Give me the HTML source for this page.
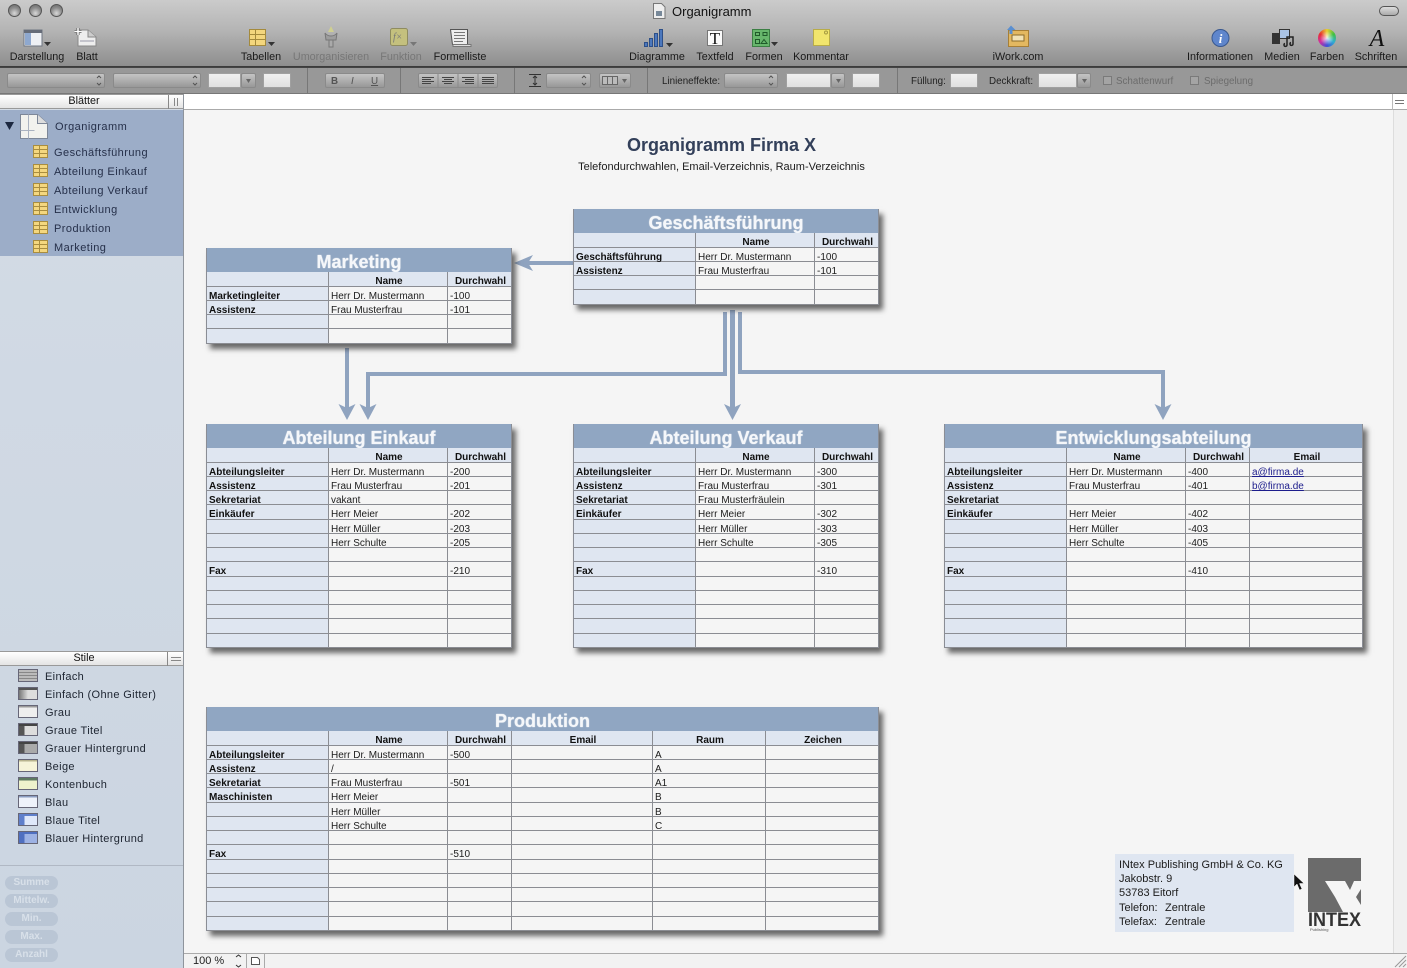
<!DOCTYPE html>
<html lang="de"><head><meta charset="utf-8"><title>Organigramm</title>
<style>
*{box-sizing:border-box}
html,body{margin:0;padding:0}
body{width:1407px;height:968px;position:relative;overflow:hidden;background:#f5f5f5;font-family:"Liberation Sans",sans-serif;color:#111}
.a{position:absolute}
.top{left:0;top:0;width:1407px;height:67px;background:linear-gradient(#cbcbcb,#b5b5b5 45%,#8e8e8e);border-bottom:1px solid #3c3c3c}
.fmt{left:0;top:67px;width:1407px;height:27px;background:#989898;border-top:1px solid #444;border-bottom:1px solid #777}
.tl{position:absolute;top:51px;font-size:10.8px;line-height:12px;transform:translateX(-50%);white-space:nowrap;color:#1a1a1a}
.tl.d{color:#777}
.lt{position:absolute;width:13px;height:13px;top:4px;border-radius:50%;background:radial-gradient(circle at 50% 75%,#d8d8d8,#8c8c8c 55%,#666);border:1px solid #555}
.s{position:absolute;top:73px;height:15px;background:linear-gradient(#c4c4c4,#989898);border:1px solid #8a8a8a;border-radius:2px}
.w{background:linear-gradient(#f0f0f0,#e0e0e0);border:1px solid #a0a0a0;border-radius:1px}
.sep{position:absolute;top:68px;height:25px;width:1px;background:#777}
.f{position:absolute;top:75.500px;font-size:9.8px;line-height:11px;color:#222;white-space:nowrap}
.f.d{color:#6c6c6c}
.cb{position:absolute;top:76px;width:9px;height:9px;border:1px solid #7a7a7a;background:#a4a4a4}
.side{left:0;top:94px;width:184px;height:874px;background:linear-gradient(#d3dbe5,#cbd5e1);border-right:1px solid #8e949c}
.hd{left:0;width:184px;height:15px;background:linear-gradient(#fff,#e4e4e4);border-top:1px solid #999;border-bottom:1px solid #999;font-size:10.8px;line-height:13px;text-align:center;padding-right:15px;border-right:1px solid #8e949c}
.sel{left:0;top:110px;width:183px;height:146px;background:#9cadc8}
.it{position:absolute;left:54px;font-size:11px;line-height:13px;color:#26304a;letter-spacing:.45px;white-space:nowrap}
.gi{position:absolute;left:33px;width:15px;height:13px;border:1px solid #a98d3f;background:
linear-gradient(#a98d3f,#a98d3f) 0 3px/100% 1px no-repeat,linear-gradient(#a98d3f,#a98d3f) 0 7px/100% 1px no-repeat,linear-gradient(#a98d3f,#a98d3f) 5px 0/1px 100% no-repeat,#f4d77f}
.st{position:absolute;left:45px;font-size:11px;line-height:13px;color:#1d2430;letter-spacing:.35px;white-space:nowrap}
.si{position:absolute;left:18px;width:20px;height:13px;border:1px solid #667}
.pb{position:absolute;left:5px;width:53px;height:14px;border-radius:7px;background:#bac6d5;color:#d8e0e9;font-size:10px;font-weight:bold;line-height:14px;text-align:center}
.t{position:absolute;box-shadow:4px 5px 5px rgba(30,30,30,.65);background:#f5f5f5;border-left:1px solid #8a8d95;border-right:1px solid #8a8d95}
.t h2{margin:0;height:24px;background:#90a6c2;color:#f5f7fa;font-size:18px;line-height:28px;text-align:center;font-weight:bold;overflow:hidden;text-shadow:0 0 1px #fff}
.t table{border-spacing:0;table-layout:fixed;width:100%;font-size:10px;line-height:7px}
.t td{height:14px;padding:6px 0 0 2px;border-bottom:1px solid #8b8d93;border-left:1px solid #8b8d93;white-space:nowrap;overflow:visible;color:#1c1c1c}
.t td:first-child{background:#dfe6f1;font-weight:bold;border-left:0;color:#111}
.t tr:nth-child(4n+1) td{height:15px;padding-top:4px;line-height:9px}
.t tr:first-child td{background:#dfe6f1;font-weight:bold;text-align:center;color:#111}
.t a{color:#1c1c8c;text-decoration:underline}
.lbl{position:absolute;font-size:11px;line-height:14px;white-space:nowrap;color:#1c1c1c}
</style></head><body>

<div class="a top"></div>
<div class="lt" style="left:8px"></div><div class="lt" style="left:29px"></div><div class="lt" style="left:50px"></div>
<svg class="a" style="left:652px;top:3px" width="14" height="16" viewBox="0 0 14 16"><path d="M1.500 .5h8l3.500 3.500v11.500h-11.500z" fill="#eee" stroke="#777"/><path d="M4 8h6v5h-6z" fill="#789"/></svg>
<div class="a" style="left:672px;top:4px;font-size:13px;line-height:15px;color:#111">Organigramm</div>
<div class="a" style="left:1379px;top:6px;width:20px;height:10px;border:1px solid #555;border-radius:5px;background:linear-gradient(#ddd,#aaa)"></div>

<div class="a" style="left:1318px;top:29px;width:18px;height:18px;border-radius:50%;background:radial-gradient(circle,rgba(255,255,255,.85),rgba(255,255,255,0) 55%),conic-gradient(#e8d030,#40c040,#30b0d0,#4050d8,#d030a0,#e83030,#e8d030)"></div>

<svg class="a" style="left:0;top:20px" width="1407" height="32" viewBox="0 0 1407 32">
<!-- Darstellung -->
<rect x="24" y="10" width="18" height="16" fill="#eef0f4" stroke="#6f7682"/><rect x="24" y="10" width="18" height="3" fill="#666c78"/><rect x="25" y="13" width="6" height="12" fill="#8ea8cf"/>
<path d="M44 22h7l-3.500 4z" fill="#333"/>
<!-- Blatt -->
<path d="M78 10h10l8 7v9h-18z" fill="#eee" stroke="#888"/><path d="M88 10v7h8" fill="#ccc" stroke="#888"/><path d="M78 8v7M74.500 11.500h7" stroke="#555" stroke-width="3"/><path d="M78 8v7M74.500 11.500h7" stroke="#fff" stroke-width="1.500"/><path d="M80 21h14" stroke="#99a"/>
<!-- Tabellen -->
<rect x="249.500" y="9.500" width="16" height="16" fill="#f3d67d" stroke="#a48a3c"/><path d="M249.500 14.500h16M249.500 19.500h16M255.500 9.500v16" stroke="#a48a3c"/>
<path d="M268 22h7l-3.500 4z" fill="#333"/>
<!-- Umorganisieren -->
<path d="M331 6l3 6h-6z" fill="#cfcf90"/><path d="M325 13c3 4 9 4 12 0l-1 7h-10z" fill="#9d9d9d" stroke="#777"/><path d="M329 20h4v7h-4z" fill="#aaa" stroke="#777"/>
<!-- Funktion -->
<rect x="390.500" y="8.500" width="17" height="17" rx="2" fill="#c4c07e" stroke="#8f8c60"/><text x="393" y="20" font-family="Liberation Serif" font-style="italic" font-size="10" fill="#777">f×</text>
<path d="M410 22h7l-3.500 4z" fill="#777"/>
<!-- Formelliste -->
<path d="M450.500 9.500h17v15h-15z" fill="#eee" stroke="#555"/><path d="M454 12.500h11M454 15.500h11M454 18.500h11M454 21.500h9" stroke="#777"/><path d="M453 24.500h18v2h-18z" fill="#ddd" stroke="#777"/>
<!-- Diagramme -->
<path d="M644.500 22.500h3v4h-3zM649.500 18.500h3v8h-3zM654.500 13.500h3v13h-3zM659.500 9.500h3v17h-3z" fill="#4c78bd" stroke="#2d4f88"/>
<path d="M666 23h7l-3.500 4z" fill="#333"/>
<!-- Textfeld -->
<rect x="707.500" y="10.500" width="15" height="15" fill="#fafafa" stroke="#777"/><text x="715" y="24" text-anchor="middle" font-family="Liberation Serif" font-size="17" fill="#111">T</text>
<!-- Formen -->
<rect x="752.500" y="9.500" width="17" height="17" fill="#67b66c" stroke="#3c7f44"/><path d="M755.500 12.500h4v3h-4zM763 12.500h4v3h-4zM755.500 19.500h4v4h-4zM761 23.500l3-4 3 4z" fill="none" stroke="#1f5a2a"/>
<path d="M771 22h7l-3.500 4z" fill="#333"/>
<!-- Kommentar -->
<rect x="813.500" y="9.500" width="16" height="16" fill="#f1e56d" stroke="#b8ac48"/><circle cx="826" cy="12.500" r="1.500" fill="none" stroke="#a59a40"/>
<!-- iWork -->
<rect x="1008.500" y="10.500" width="20" height="16" fill="#e3b860" stroke="#a77f36"/><rect x="1012" y="15" width="12" height="6" fill="#f1e2b4" stroke="#8a6b2d"/><path d="M1007 10l4-4.500 4.500 4.500h-3v4h-3v-4z" fill="#5a8fd0"/>
<!-- Informationen -->
<circle cx="1220.500" cy="18" r="8.500" fill="#5f86cc" stroke="#39588f"/><text x="1220.500" y="23" text-anchor="middle" font-family="Liberation Serif" font-style="italic" font-weight="bold" font-size="13" fill="#fff">i</text>
<!-- Medien -->
<rect x="1272" y="13" width="8" height="11" fill="#333"/><rect x="1279.500" y="9.500" width="10" height="9" fill="#a9c3e5" stroke="#333"/><path d="M1287 25v-8h6v7M1287 25a1.500 1.500 0 1 1-2-1.500M1293 24a1.500 1.500 0 1 1-2-1.500" fill="none" stroke="#222" stroke-width="1.500"/>
<text x="1377" y="26" text-anchor="middle" font-family="Liberation Serif" font-style="italic" font-size="24" fill="#111">A</text>
</svg>

<span class="tl" style="left:37px">Darstellung</span><span class="tl" style="left:87px">Blatt</span><span class="tl" style="left:261px">Tabellen</span><span class="tl d" style="left:331px">Umorganisieren</span><span class="tl d" style="left:401px">Funktion</span><span class="tl" style="left:460px">Formelliste</span><span class="tl" style="left:657px">Diagramme</span><span class="tl" style="left:715px">Textfeld</span><span class="tl" style="left:764px">Formen</span><span class="tl" style="left:821px">Kommentar</span><span class="tl" style="left:1018px">iWork.com</span><span class="tl" style="left:1220px">Informationen</span><span class="tl" style="left:1282px">Medien</span><span class="tl" style="left:1327px">Farben</span><span class="tl" style="left:1376px">Schriften</span>

<div class="a fmt"></div>
<div class="s" style="left:7px;width:98px"></div><div class="s" style="left:113px;width:88px"></div>
<div class="s w" style="left:208px;width:33px"></div><div class="s" style="left:241px;width:15px"></div>
<div class="s w" style="left:263px;width:28px"></div>
<div class="sep" style="left:307px"></div>
<div class="s" style="left:325px;width:60px"></div>
<span class="f" style="left:331px;font-weight:bold;color:#555">B</span><span class="f" style="left:351px;font-style:italic;color:#555">I</span><span class="f" style="left:371px;text-decoration:underline;color:#555">U</span>
<div class="sep" style="left:400px"></div>
<div class="s" style="left:418px;width:80px"></div>
<svg class="a" style="left:418px;top:73px" width="80" height="15" viewBox="0 0 80 15"><path d="M20 0v15M40 0v15M60 0v15" stroke="#8a8a8a"/><path d="M4 4.500h12M4 6.500h9M4 8.500h12M4 10.500h9M24 4.500h12M26 6.500h8M24 8.500h12M26 10.500h8M44 4.500h12M47 6.500h9M44 8.500h12M47 10.500h9M64 4.500h12M64 6.500h12M64 8.500h12M64 10.500h12" stroke="#444"/></svg>
<div class="sep" style="left:514px"></div>
<svg class="a" style="left:528px;top:73px" width="14" height="15" viewBox="0 0 14 15"><path d="M1 1.500h12M1 13.500h12M7 3v9M5 5l2-2 2 2M5 10l2 2 2-2" fill="none" stroke="#333"/></svg>
<div class="s" style="left:546px;width:45px"></div>
<div class="s" style="left:599px;width:32px"></div>
<svg class="a" style="left:602px;top:76px" width="16" height="9" viewBox="0 0 16 9"><path d="M.5 .5h15v8h-15zM5.500 .5v8M10.500 .5v8" fill="#bbb" stroke="#666"/></svg>
<div class="sep" style="left:647px"></div>
<span class="f" style="left:662px">Linieneffekte:</span>
<div class="s" style="left:724px;width:54px"></div>
<div class="s w" style="left:786px;width:45px"></div><div class="s" style="left:831px;width:14px"></div>
<div class="s w" style="left:852px;width:28px"></div>
<div class="sep" style="left:897px"></div>
<span class="f" style="left:911px">Füllung:</span>
<div class="s w" style="left:950px;width:28px"></div>
<span class="f" style="left:989px">Deckkraft:</span>
<div class="s w" style="left:1038px;width:39px"></div><div class="s" style="left:1077px;width:14px"></div>
<div class="cb" style="left:1103px"></div><span class="f d" style="left:1116px">Schattenwurf</span>
<div class="cb" style="left:1190px"></div><span class="f d" style="left:1204px">Spiegelung</span>
<svg class="a" style="left:0;top:73px" width="1100" height="15" viewBox="0 0 1100 15"><path d="M97 5l2-2 2 2M97 10l2 2 2-2M193 5l2-2 2 2M193 10l2 2 2-2M582 5l2-2 2 2M582 10l2 2 2-2M769 5l2-2 2 2M769 10l2 2 2-2" fill="none" stroke="#555"/><path d="M246 6h5l-2.500 4zM622 6h5l-2.500 4zM836 6h5l-2.500 4zM1082 6h5l-2.500 4z" fill="#666"/></svg>

<!-- ruler strip -->
<div class="a" style="left:184px;top:94px;width:1223px;height:16px;background:#fff;border-bottom:1px solid #aaa"></div>
<div class="a" style="left:1392px;top:94px;width:15px;height:16px;background:#fff;border-left:1px solid #bbb;border-bottom:1px solid #aaa"></div>
<svg class="a" style="left:1394px;top:98px" width="11" height="8"><path d="M1 2.500h9M1 5.500h9" stroke="#777"/></svg>
<div class="a" style="left:1393px;top:110px;width:14px;height:843px;background:#f0f0f0;border-left:1px solid #ddd"></div>
<div class="a" style="left:184px;top:953px;width:1223px;height:15px;background:#f2f2f2;border-top:1px solid #aaa"></div>
<div class="a" style="left:193px;top:955px;font-size:11px;line-height:13px;color:#222">100 %</div>
<svg class="a" style="left:184px;top:954px" width="90" height="14"><path d="M52 2l2.500-2 2.500 2M52 10l2.500 2 2.500-2" fill="none" stroke="#333" transform="translate(0 1)"/><path d="M62.500 0v14M80.500 0v14" stroke="#aaa"/><path d="M67.500 3.500h6l2 2v5h-8z" fill="#fff" stroke="#555"/></svg>

<!-- sidebar -->
<div class="a side"></div>
<div class="a hd" style="top:94px">Blätter</div>
<svg class="a" style="left:168px;top:95px" width="16" height="14"><path d="M.5 0v14M6.500 3v8M9.500 3v8" stroke="#888"/></svg>
<div class="a sel"></div>
<svg class="a" style="left:4px;top:113px" width="46" height="27" viewBox="0 0 46 27"><path d="M1 9h9l-4.500 8z" fill="#1c2840"/><path d="M16.500 1.500h17l10 9v15h-27z" fill="#f2f2ee" stroke="#7d8798"/><path d="M33.500 1.500v9h10" fill="#ddd" stroke="#7d8798"/><path d="M16.500 17.500h14M24.500 1.500v24" stroke="#aab2c0"/></svg>
<span class="it" style="top:121px;left:55px">Organigramm</span>
<i class="gi" style="top:145px"></i><span class="it" style="top:147px">Geschäftsführung</span>
<i class="gi" style="top:164px"></i><span class="it" style="top:166px">Abteilung Einkauf</span>
<i class="gi" style="top:183px"></i><span class="it" style="top:185px">Abteilung Verkauf</span>
<i class="gi" style="top:202px"></i><span class="it" style="top:204px">Entwicklung</span>
<i class="gi" style="top:221px"></i><span class="it" style="top:223px">Produktion</span>
<i class="gi" style="top:240px"></i><span class="it" style="top:242px">Marketing</span>

<div class="a hd" style="top:651px">Stile</div>
<svg class="a" style="left:167px;top:652px" width="17" height="14"><path d="M.5 0v14M4 5.500h10M4 8.500h10" stroke="#888"/></svg>
<i class="si" style="top:669px;background:repeating-linear-gradient(#bbb 0 2px,#888 2px 3px)"></i><span class="st" style="top:671px">Einfach</span>
<i class="si" style="top:687px;background:linear-gradient(#555 20%,transparent 20%),linear-gradient(90deg,#777,#ddd 50%)"></i><span class="st" style="top:689px">Einfach (Ohne Gitter)</span>
<i class="si" style="top:705px;background:linear-gradient(#999 15%,#eee 15%)"></i><span class="st" style="top:707px">Grau</span>
<i class="si" style="top:723px;background:linear-gradient(#444 20%,transparent 20%),linear-gradient(90deg,#555 30%,#ddd 30%)"></i><span class="st" style="top:725px">Graue Titel</span>
<i class="si" style="top:741px;background:linear-gradient(#444 20%,transparent 20%),linear-gradient(90deg,#555 30%,#aaa 30%)"></i><span class="st" style="top:743px">Grauer Hintergrund</span>
<i class="si" style="top:759px;background:linear-gradient(#b8b48e 15%,#f6f4d8 15%)"></i><span class="st" style="top:761px">Beige</span>
<i class="si" style="top:777px;background:linear-gradient(#5d7a60 25%,#eef2cc 25%)"></i><span class="st" style="top:779px">Kontenbuch</span>
<i class="si" style="top:795px;background:linear-gradient(#8a9cc0 15%,#eef2fa 15%)"></i><span class="st" style="top:797px">Blau</span>
<i class="si" style="top:813px;background:linear-gradient(#5f7fcb 20%,transparent 20%),linear-gradient(90deg,#5f7fcb 30%,#dfe8fa 30%)"></i><span class="st" style="top:815px">Blaue Titel</span>
<i class="si" style="top:831px;background:linear-gradient(#4f6fc0 20%,transparent 20%),linear-gradient(90deg,#4f6fc0 30%,#9db2e4 30%)"></i><span class="st" style="top:833px">Blauer Hintergrund</span>
<div class="a" style="left:0;top:865px;width:183px;height:1px;background:#b0b8c4"></div>
<div class="pb" style="top:876px">Summe</div><div class="pb" style="top:894px">Mittelw.</div><div class="pb" style="top:912px">Min.</div><div class="pb" style="top:930px">Max.</div><div class="pb" style="top:948px">Anzahl</div>

<!-- canvas -->
<div class="a" style="left:184px;top:135px;width:1075px;text-align:center;font-size:18px;line-height:20px;font-weight:bold;color:#33405a">Organigramm Firma X</div>
<div class="a" style="left:184px;top:160px;width:1075px;text-align:center;font-size:11px;line-height:14px;color:#1c1c1c">Telefondurchwahlen, Email-Verzeichnis, Raum-Verzeichnis</div>

<svg class="a" style="left:184px;top:110px" width="1209" height="320" viewBox="184 110 1209 320">
<g fill="none" stroke="#8fa3bf" stroke-width="4">
<path d="M573 263h-50"/>
<path d="M347 348v60"/>
<path d="M368 408v-34h357v-62"/>
<path d="M732.500 310v98" stroke-width="5"/>
<path d="M740 312v60h423v36"/>
</g>
<g fill="#8fa3bf">
<path d="M514 263l19-8-5 8 5 8z"/>
<path d="M347 420l-8.500-16 8.500 4 8.500-4z"/>
<path d="M368 420l-8.500-16 8.500 4 8.500-4z"/>
<path d="M732.500 420l-8.500-16 8.500 4 8.500-4z"/>
<path d="M1163 420l-8.500-16 8.500 4 8.500-4z"/>
</g>
</svg>

<div class="t" style="left:573px;top:209px;width:306px"><h2>Geschäftsführung</h2><table><colgroup><col style="width:121px"><col style="width:119px"><col></colgroup>
<tr><td><td>Name<td>Durchwahl
<tr><td>Geschäftsführung<td>Herr Dr. Mustermann<td>-100
<tr><td>Assistenz<td>Frau Musterfrau<td>-101
<tr><td><td><td>
<tr><td><td><td>
</table></div>

<div class="t" style="left:206px;top:248px;width:306px"><h2>Marketing</h2><table><colgroup><col style="width:121px"><col style="width:119px"><col></colgroup>
<tr><td><td>Name<td>Durchwahl
<tr><td>Marketingleiter<td>Herr Dr. Mustermann<td>-100
<tr><td>Assistenz<td>Frau Musterfrau<td>-101
<tr><td><td><td>
<tr><td><td><td>
</table></div>

<div class="t" style="left:206px;top:424px;width:306px"><h2>Abteilung Einkauf</h2><table><colgroup><col style="width:121px"><col style="width:119px"><col></colgroup>
<tr><td><td>Name<td>Durchwahl
<tr><td>Abteilungsleiter<td>Herr Dr. Mustermann<td>-200
<tr><td>Assistenz<td>Frau Musterfrau<td>-201
<tr><td>Sekretariat<td>vakant<td>
<tr><td>Einkäufer<td>Herr Meier<td>-202
<tr><td><td>Herr Müller<td>-203
<tr><td><td>Herr Schulte<td>-205
<tr><td><td><td>
<tr><td>Fax<td><td>-210
<tr><td><td><td>
<tr><td><td><td>
<tr><td><td><td>
<tr><td><td><td>
<tr><td><td><td>
</table></div>

<div class="t" style="left:573px;top:424px;width:306px"><h2>Abteilung Verkauf</h2><table><colgroup><col style="width:121px"><col style="width:119px"><col></colgroup>
<tr><td><td>Name<td>Durchwahl
<tr><td>Abteilungsleiter<td>Herr Dr. Mustermann<td>-300
<tr><td>Assistenz<td>Frau Musterfrau<td>-301
<tr><td>Sekretariat<td>Frau Musterfräulein<td>
<tr><td>Einkäufer<td>Herr Meier<td>-302
<tr><td><td>Herr Müller<td>-303
<tr><td><td>Herr Schulte<td>-305
<tr><td><td><td>
<tr><td>Fax<td><td>-310
<tr><td><td><td>
<tr><td><td><td>
<tr><td><td><td>
<tr><td><td><td>
<tr><td><td><td>
</table></div>

<div class="t" style="left:944px;top:424px;width:419px"><h2>Entwicklungsabteilung</h2><table><colgroup><col style="width:121px"><col style="width:119px"><col style="width:64px"><col></colgroup>
<tr><td><td>Name<td>Durchwahl<td>Email
<tr><td>Abteilungsleiter<td>Herr Dr. Mustermann<td>-400<td><a>a@firma.de</a>
<tr><td>Assistenz<td>Frau Musterfrau<td>-401<td><a>b@firma.de</a>
<tr><td>Sekretariat<td><td><td>
<tr><td>Einkäufer<td>Herr Meier<td>-402<td>
<tr><td><td>Herr Müller<td>-403<td>
<tr><td><td>Herr Schulte<td>-405<td>
<tr><td><td><td><td>
<tr><td>Fax<td><td>-410<td>
<tr><td><td><td><td>
<tr><td><td><td><td>
<tr><td><td><td><td>
<tr><td><td><td><td>
<tr><td><td><td><td>
</table></div>

<div class="t" style="left:206px;top:707px;width:673px"><h2>Produktion</h2><table><colgroup><col style="width:121px"><col style="width:119px"><col style="width:64px"><col style="width:141px"><col style="width:113px"><col></colgroup>
<tr><td><td>Name<td>Durchwahl<td>Email<td>Raum<td>Zeichen
<tr><td>Abteilungsleiter<td>Herr Dr. Mustermann<td>-500<td><td>A<td>
<tr><td>Assistenz<td>/<td><td><td>A<td>
<tr><td>Sekretariat<td>Frau Musterfrau<td>-501<td><td>A1<td>
<tr><td>Maschinisten<td>Herr Meier<td><td><td>B<td>
<tr><td><td>Herr Müller<td><td><td>B<td>
<tr><td><td>Herr Schulte<td><td><td>C<td>
<tr><td><td><td><td><td><td>
<tr><td>Fax<td><td>-510<td><td><td>
<tr><td><td><td><td><td><td>
<tr><td><td><td><td><td><td>
<tr><td><td><td><td><td><td>
<tr><td><td><td><td><td><td>
<tr><td><td><td><td><td><td>
</table></div>

<!-- address -->
<div class="a" style="left:1115px;top:854px;width:179px;height:78px;background:#dfe6f1"></div>
<span class="lbl" style="left:1119px;top:858px">INtex Publishing GmbH &amp; Co. KG</span>
<span class="lbl" style="left:1119px;top:872px">Jakobstr. 9</span>
<span class="lbl" style="left:1119px;top:886px">53783 Eitorf</span>
<span class="lbl" style="left:1119px;top:901px">Telefon:</span><span class="lbl" style="left:1165px;top:901px">Zentrale</span>
<span class="lbl" style="left:1119px;top:915px">Telefax:</span><span class="lbl" style="left:1165px;top:915px">Zentrale</span>

<svg class="a" style="left:1308px;top:858px" width="54" height="74" viewBox="0 0 54 74">
<rect width="53" height="54" fill="#6b6b6b"/>
<path d="M17 23h20l5 9 4-9h7v8l-5 8 5 8v7h-18l-8-15z" fill="#f5f5f5"/>
<text x="0" y="68" font-size="19" font-weight="bold" fill="#333" textLength="53" lengthAdjust="spacingAndGlyphs">INTEX</text>
<text x="2" y="73" font-size="4" fill="#555">Publishing</text>
</svg>
<svg class="a" style="left:1293px;top:874px" width="12" height="17" viewBox="0 0 12 17"><path d="M1 0v13l3-3 2.500 6 2.500-1-2.500-5.500h4.500z" fill="#111" stroke="#fff" stroke-width=".5"/></svg>
<svg class="a" style="left:1393px;top:954px" width="14" height="14"><path d="M2 13L13 2M6 13l7-7M10 13l3-3" stroke="#999"/></svg>
</body></html>
